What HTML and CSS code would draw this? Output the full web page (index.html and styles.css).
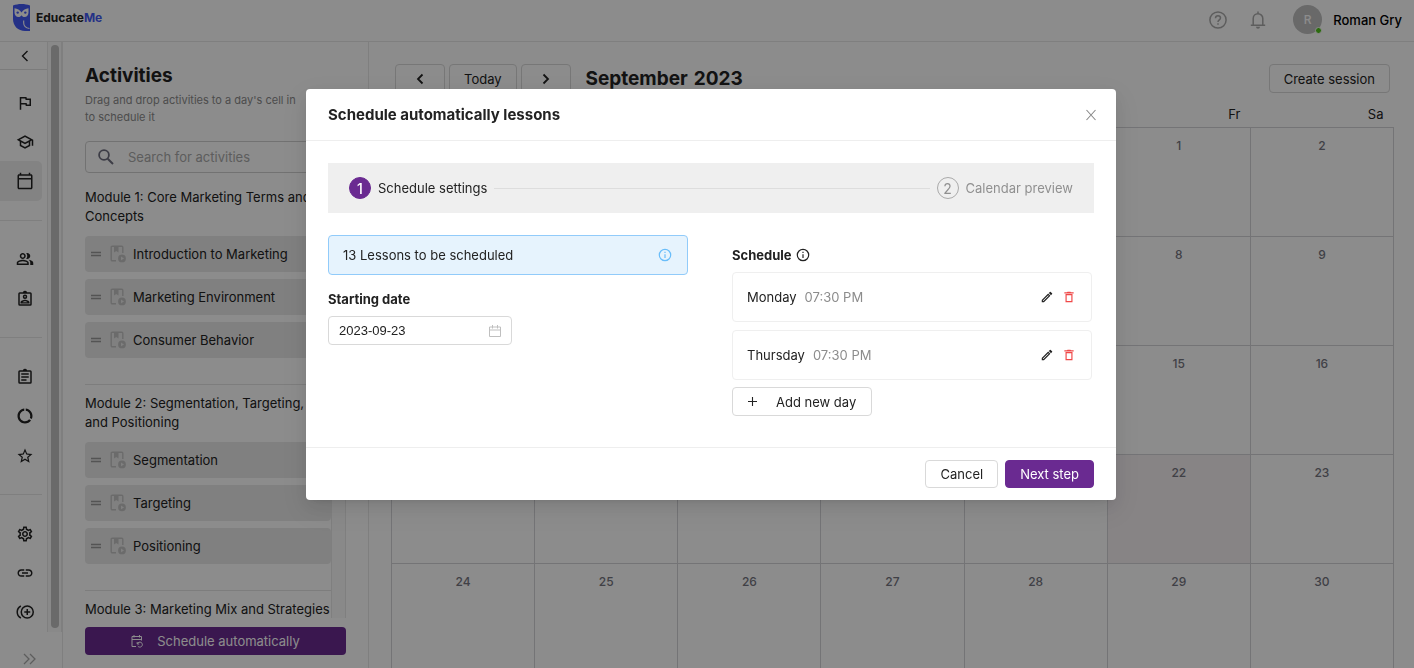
FILE: index.html
```
<!DOCTYPE html>
<html lang="en">
<head>
    <meta charset="UTF-8" />
    <meta name="viewport" content="width=device-width, initial-scale=1.0"/>
    <title>EducateMe - Schedule</title>
    <link rel="stylesheet" href="styles.css">
</head>
<body>
<svg class="sprite" aria-hidden="true">
    <symbol id="i-drag" viewBox="0 0 12 8"><path d="M1 2.500h10M1 5.500h10" stroke="currentColor" stroke-width="1.400"/></symbol>
    <symbol id="i-lesson" viewBox="0 0 16 18">
        <path d="M6 15.800H2.200a1 1 0 0 1-1-1V2.200a1 1 0 0 1 1-1h9.600a1 1 0 0 1 1 1V8" fill="none" stroke="currentColor" stroke-width="1.400"/>
        <path d="M4 1.500h4.500v6L6.250 6 4 7.500z" fill="currentColor"/>
        <path fill-rule="evenodd" d="M12 9.500a3.900 3.900 0 1 0 0 7.800 3.900 3.900 0 0 0 0-7.800zM11 11.500l3 1.900-3 1.900z" fill="currentColor"/>
    </symbol>
    <symbol id="i-edit" viewBox="0 0 24 24"><path fill="currentColor" d="M3 17.250V21h3.750L17.810 9.940l-3.750-3.750L3 17.250zM5.920 19H5v-.92l9.060-9.060.92.92L5.920 19zM20.710 5.630l-2.340-2.340a1 1 0 0 0-1.410 0l-1.830 1.830 3.750 3.750 1.830-1.830a1 1 0 0 0 0-1.410z"/></symbol>
    <symbol id="i-delete" viewBox="0 0 24 24"><path fill="currentColor" d="M6 21h12V7H6v14zM8 9h8v10H8V9zm7.500-5l-1-1h-5l-1 1H4v2h16V4h-4.500z"/></symbol>
    <symbol id="i-info" viewBox="0 0 14 14"><circle cx="7" cy="7" r="5.700" fill="none" stroke="currentColor" stroke-width="1.200"/><path d="M7 6.200V10M7 3.800v1.300" stroke="currentColor" stroke-width="1.200"/></symbol>
</svg>

<header class="topbar">
    <a class="logo" href="#">
        <svg class="logo-mark" viewBox="0 0 17 27">
            <path fill="#4359f5" d="M0 1.500C3 .5 5 0 8.500 0S14 .5 17 1.500V27h-5C5 27 0 22 0 15z"/>
            <path fill="#fff" d="M1.500 4.200c2.800.2 5.300 1.600 7 4.300 1.700-2.700 4.200-4.100 7-4.300v4.300c0 2.700-1.700 4.500-4 4.500-1.400 0-2.300-.6-3-1.800-.7 1.200-1.600 1.800-3 1.800-2.300 0-4-1.800-4-4.500z"/>
            <circle cx="4.700" cy="8.600" r="1.200" fill="#4359f5"/><circle cx="12.300" cy="8.600" r="1.200" fill="#4359f5"/>
            <path d="M10.700 16.500v2.500c0 3 2 5 5.800 5.500" fill="none" stroke="#fff" stroke-width="1.100"/>
        </svg>
        <span>Educate<b>Me</b></span>
    </a>
    <div class="topbar-right">
        <button class="icon-btn" aria-label="Help">
            <svg width="18" height="18" viewBox="0 0 18 18" fill="none" stroke="currentColor" stroke-width="1.500"><circle cx="9" cy="9" r="8.100"/><path d="M6.500 7.200C6.500 5.700 7.600 4.700 9 4.700s2.500 1 2.500 2.300c0 1.800-2.500 2-2.500 4M9 12.200v1.600"/></svg>
        </button>
        <button class="icon-btn" aria-label="Notifications">
            <svg width="16" height="18" viewBox="0 0 16 18"><path d="M3.200 14V7.500a4.800 4.800 0 0 1 9.600 0V14M.8 14.200h14.400M8 .6v2" fill="none" stroke="currentColor" stroke-width="1.500"/><path d="M6 15.800h4a2 2 0 0 1-4 0z" fill="currentColor"/></svg>
        </button>
        <span class="avatar">R<i class="online"></i></span>
        <span class="user-name">Roman Gry</span>
    </div>
</header>

<div class="layout">
    <aside class="sidebar">
        <div class="sidebar-scroll">
            <div class="sidebar-main">
                <button class="collapse" aria-label="Back">
                    <svg width="8" height="12" viewBox="0 0 8 12"><path d="M6.500 1L1.500 6l5 5" fill="none" stroke="currentColor" stroke-width="1.400"/></svg>
                </button>
                <nav class="side-nav">
                    <a href="#" aria-label="Goals"><svg viewBox="0 0 24 24"><path d="M12.360 6l.4 2H18v6h-3.360l-.4-2H7V6h5.360M14 4H5v17h2v-7h5.600l.4 2h7V6h-5.600L14 4z"/></svg></a>
                    <a href="#" aria-label="Courses"><svg viewBox="0 0 24 24"><path d="M12 3L1 9l4 2.180v6L12 21l7-3.820v-6l2-1.090V17h2V9L12 3zm6.820 6L12 12.720 5.180 9 12 5.280 18.820 9zM17 15.990l-5 2.730-5-2.730v-3.720L12 15l5-2.730v3.720z"/></svg></a>
                    <a href="#" class="active" aria-label="Calendar"><svg viewBox="0 0 24 24"><path d="M20 3h-1V1h-2v2H7V1H5v2H4c-1.100 0-2 .9-2 2v16c0 1.100.9 2 2 2h16c1.100 0 2-.9 2-2V5c0-1.100-.9-2-2-2zm0 18H4V10h16v11zm0-13H4V5h16v3z"/></svg></a>
                    <span class="sep"></span>
                    <a href="#" aria-label="People"><svg viewBox="0 0 24 24"><path d="M16.670 13.130C18.040 14.060 19 15.320 19 17v3h4v-3c0-2.180-3.570-3.470-6.330-3.870zM15 12c2.210 0 4-1.790 4-4s-1.790-4-4-4c-.47 0-.91.1-1.330.24C14.500 5.270 15 6.580 15 8s-.5 2.730-1.330 3.760c.42.14.86.24 1.330.24zM9 12c2.210 0 4-1.790 4-4s-1.790-4-4-4-4 1.790-4 4 1.790 4 4 4zm0-6c1.100 0 2 .9 2 2s-.9 2-2 2-2-.9-2-2 .9-2 2-2zM9 13c-2.670 0-8 1.340-8 4v3h16v-3c0-2.660-5.330-4-8-4zm6 5H3v-.99C3.200 16.290 6.300 15 9 15s5.800 1.290 6 2v1z"/></svg></a>
                    <a href="#" aria-label="Profiles"><svg viewBox="0 0 24 24"><path fill-rule="evenodd" d="M5 3h4.200a3 3 0 0 1 5.600 0H19a2 2 0 0 1 2 2v14a2 2 0 0 1-2 2H5a2 2 0 0 1-2-2V5a2 2 0 0 1 2-2zm0 2v14h14V5zM12 6a3 3 0 1 1 0 6 3 3 0 0 1 0-6zm0 2a1 1 0 1 0 0 2 1 1 0 0 0 0-2zM6 18v-1.500C6 14.300 10 13 12 13s6 1.300 6 3.500V18zm2.500-1.600h7c-.7-.7-2.400-1.400-3.500-1.400s-2.800.7-3.500 1.400z"/></svg></a>
                    <span class="sep"></span>
                    <a href="#" aria-label="Assignments"><svg viewBox="0 0 24 24"><path fill-rule="evenodd" d="M5 3h4.200a3 3 0 0 1 5.600 0H19a2 2 0 0 1 2 2v14a2 2 0 0 1-2 2H5a2 2 0 0 1-2-2V5a2 2 0 0 1 2-2zm0 2v14h14V5zM7 7h10v2H7zm0 4h10v2H7zm0 4h7v2H7z"/></svg></a>
                    <a href="#" aria-label="Progress"><svg viewBox="0 0 24 24"><path d="M13 2.050v3.030c3.390.49 6 3.390 6 6.920 0 .9-.18 1.750-.48 2.540l2.600 1.530c.56-1.240.88-2.620.88-4.070 0-5.180-3.950-9.450-9-9.950zM12 19c-3.870 0-7-3.130-7-7 0-3.530 2.610-6.430 6-6.920V2.050c-5.060.5-9 4.760-9 9.950 0 5.520 4.470 10 9.990 10 3.310 0 6.240-1.610 8.060-4.090l-2.600-1.530C16.170 17.980 14.210 19 12 19z"/></svg></a>
                    <a href="#" aria-label="Reviews"><svg viewBox="0 0 24 24"><path d="M22 9.240l-7.190-.62L12 2 9.190 8.630 2 9.240l5.460 4.730L5.820 21 12 17.270 18.180 21l-1.630-7.030L22 9.240zM12 15.400l-3.760 2.270 1-4.280-3.320-2.880 4.380-.38L12 6.100l1.710 4.040 4.380.38-3.320 2.880 1 4.280L12 15.400z"/></svg></a>
                    <span class="sep"></span>
                    <a href="#" aria-label="Settings"><svg viewBox="0 0 24 24"><path d="M19.430 12.980c.04-.32.07-.64.07-.98s-.03-.66-.07-.98l2.110-1.650c.19-.15.24-.42.12-.64l-2-3.460c-.09-.16-.26-.25-.44-.25-.06 0-.12.01-.17.03l-2.490 1c-.52-.4-1.080-.73-1.690-.98l-.38-2.650C14.460 2.180 14.250 2 14 2h-4c-.25 0-.46.18-.49.42l-.38 2.650c-.61.25-1.170.59-1.690.98l-2.490-1c-.06-.02-.12-.03-.18-.03-.17 0-.34.09-.43.25l-2 3.460c-.13.22-.07.49.12.64l2.110 1.650c-.04.32-.07.65-.07.98s.03.66.07.98l-2.110 1.650c-.19.15-.24.42-.12.64l2 3.460c.09.16.26.25.44.25.06 0 .12-.01.17-.03l2.490-1c.52.4 1.080.73 1.690.98l.38 2.650c.03.24.24.42.49.42h4c.25 0 .46-.18.49-.42l.38-2.650c.61-.25 1.170-.59 1.690-.98l2.490 1c.06.02.12.03.18.03.17 0 .34-.09.43-.25l2-3.460c.12-.22.07-.49-.12-.64l-2.110-1.650zm-1.980-1.710c.04.31.05.52.05.73 0 .21-.02.43-.05.73l-.14 1.130.89.7 1.080.84-.7 1.210-1.270-.51-1.040-.42-.9.68c-.43.32-.84.56-1.250.73l-1.060.43-.16 1.130-.2 1.350h-1.400l-.19-1.350-.16-1.130-1.060-.43c-.43-.18-.83-.41-1.230-.71l-.91-.7-1.060.43-1.270.51-.7-1.210 1.080-.84.89-.7-.14-1.130c-.03-.31-.05-.54-.05-.74s.02-.43.05-.73l.14-1.130-.89-.7-1.080-.84.7-1.210 1.270.51 1.040.42.9-.68c.43-.32.84-.56 1.250-.73l1.060-.43.16-1.130.2-1.350h1.390l.19 1.350.16 1.130 1.060.43c.43.18.83.41 1.230.71l.91.7 1.060-.43 1.270-.51.7 1.210-1.070.85-.89.7.14 1.130zM12 8c-2.210 0-4 1.790-4 4s1.790 4 4 4 4-1.790 4-4-1.790-4-4-4zm0 6c-1.100 0-2-.9-2-2s.9-2 2-2 2 .9 2 2-.9 2-2 2z"/></svg></a>
                    <a href="#" aria-label="Integrations"><svg viewBox="0 0 24 24"><path d="M3.900 12c0-1.710 1.390-3.100 3.100-3.100h4V7H7c-2.760 0-5 2.240-5 5s2.240 5 5 5h4v-1.900H7c-1.710 0-3.100-1.390-3.100-3.100zM8 13h8v-2H8v2zm9-6h-4v1.900h4c1.710 0 3.100 1.390 3.100 3.100s-1.390 3.100-3.100 3.100h-4V17h4c2.760 0 5-2.240 5-5s-2.240-5-5-5z"/></svg></a>
                    <a href="#" aria-label="Add"><svg viewBox="0 0 24 24"><path d="M15 4a8 8 0 1 0 0 16 8 8 0 0 0 0-16m0 4v8m-4-4h8M6.500 4a9 9 0 0 0 0 16" fill="none" stroke="#222" stroke-width="2"/></svg></a>
                </nav>
            </div>
            <div class="scrollbar"><span></span></div>
        </div>
        <button class="expand" aria-label="Expand menu">
            <svg width="13" height="12" viewBox="0 0 13 12"><path d="M1 1l5 5-5 5M7 1l5 5-5 5" fill="none" stroke="currentColor" stroke-width="1.300"/></svg>
        </button>
    </aside>

    <section class="activities">
        <h1>Activities</h1>
        <p class="hint">Drag and drop activities to a day's cell in<br>to schedule it</p>
        <label class="search">
            <svg width="16" height="16" viewBox="0 0 16 16"><circle cx="6" cy="6" r="4.900" fill="none" stroke="currentColor" stroke-width="1.800"/><path d="M9.700 9.700l5.300 5.300" stroke="currentColor" stroke-width="2"/></svg>
            <input type="text" placeholder="Search for activities" aria-label="Search for activities">
        </label>
        <div class="list-wrap">
            <div class="module-list">
                <div class="module">
                    <h2>Module 1: Core Marketing Terms and Concepts</h2>
                    <ul>
                        <li><svg class="drag"><use href="#i-drag"/></svg><svg class="lesson"><use href="#i-lesson"/></svg>Introduction to Marketing</li>
                        <li><svg class="drag"><use href="#i-drag"/></svg><svg class="lesson"><use href="#i-lesson"/></svg>Marketing Environment</li>
                        <li><svg class="drag"><use href="#i-drag"/></svg><svg class="lesson"><use href="#i-lesson"/></svg>Consumer Behavior</li>
                    </ul>
                </div>
                <div class="module">
                    <h2>Module 2: Segmentation, Targeting,<br>and Positioning</h2>
                    <ul>
                        <li><svg class="drag"><use href="#i-drag"/></svg><svg class="lesson"><use href="#i-lesson"/></svg>Segmentation</li>
                        <li><svg class="drag"><use href="#i-drag"/></svg><svg class="lesson"><use href="#i-lesson"/></svg>Targeting</li>
                        <li><svg class="drag"><use href="#i-drag"/></svg><svg class="lesson"><use href="#i-lesson"/></svg>Positioning</li>
                    </ul>
                </div>
                <div class="module">
                    <h2>Module 3: Marketing Mix and Strategies</h2>
                </div>
            </div>
            <div class="list-track"></div>
        </div>
        <button class="btn primary auto-btn">
            <svg width="12" height="13" viewBox="0 0 12 13" fill="none" stroke="currentColor"><path d="M5 11.500H1v-10h9.500v4M1 4.500h9.500M3 0v2.500M8.500 0v2.500M6.200 7v2h2M6.500 8.800a2.500 2.500 0 1 1 .3 2.200"/></svg>
            Schedule automatically
        </button>
    </section>

    <main class="calendar">
        <div class="toolbar">
            <button class="btn arrow" aria-label="Previous month"><svg width="8" height="12" viewBox="0 0 8 12"><path d="M6.500 1.500L2 6l4.500 4.500" fill="none" stroke="currentColor" stroke-width="1.800"/></svg></button>
            <button class="btn">Today</button>
            <button class="btn arrow" aria-label="Next month"><svg width="8" height="12" viewBox="0 0 8 12"><path d="M1.500 1.500L6 6l-4.500 4.500" fill="none" stroke="currentColor" stroke-width="1.800"/></svg></button>
            <h2><span>September</span><span>2023</span></h2>
            <button class="btn create">Create session</button>
        </div>
        <table>
            <thead>
                <tr><th></th><th></th><th></th><th></th><th></th><th>Fr</th><th>Sa</th></tr>
            </thead>
            <tbody>
                <tr><td></td><td></td><td></td><td></td><td></td><td>1</td><td>2</td></tr>
                <tr><td></td><td></td><td></td><td></td><td></td><td>8</td><td>9</td></tr>
                <tr><td></td><td></td><td></td><td></td><td></td><td>15</td><td>16</td></tr>
                <tr><td></td><td></td><td></td><td></td><td></td><td class="today">22</td><td>23</td></tr>
                <tr><td>24</td><td>25</td><td>26</td><td>27</td><td>28</td><td>29</td><td>30</td></tr>
            </tbody>
        </table>
    </main>
</div>

<div class="overlay">
    <div class="modal" role="dialog" aria-labelledby="modal-title">
        <div class="modal-header">
            <h2 id="modal-title">Schedule automatically lessons</h2>
            <button class="close" aria-label="Close"><svg width="10" height="12" viewBox="0 0 10 12"><path d="M.5 1l9 10M9.500 1l-9 10" stroke="currentColor" stroke-width="1.100"/></svg></button>
        </div>
        <div class="modal-body">
            <ol class="steps">
                <li class="current"><span class="num">1</span>Schedule settings</li>
                <li class="line" aria-hidden="true"></li>
                <li><span class="num">2</span>Calendar preview</li>
            </ol>
            <div class="columns">
                <div class="column">
                    <div class="notice"><span>13 Lessons to be scheduled</span><svg><use href="#i-info"/></svg></div>
                    <label class="field-label" for="start-date">Starting date</label>
                    <div class="date-field">
                        <input type="text" id="start-date" value="2023-09-23">
                        <svg width="12" height="12" viewBox="0 0 12 12"><path d="M.5 2h11v9.500H.5zM.5 5h11M3.500 0v3.500M8.500 0v3.500" fill="none" stroke="currentColor"/></svg>
                    </div>
                </div>
                <div class="column">
                    <h3>Schedule <svg><use href="#i-info"/></svg></h3>
                    <div class="day">
                        <span>Monday</span><time>07:30 PM</time>
                        <button aria-label="Edit Monday"><svg><use href="#i-edit"/></svg></button>
                        <button class="delete" aria-label="Delete Monday"><svg><use href="#i-delete"/></svg></button>
                    </div>
                    <div class="day">
                        <span>Thursday</span><time>07:30 PM</time>
                        <button aria-label="Edit Thursday"><svg><use href="#i-edit"/></svg></button>
                        <button class="delete" aria-label="Delete Thursday"><svg><use href="#i-delete"/></svg></button>
                    </div>
                    <button class="btn add-day">
                        <svg width="9" height="9" viewBox="0 0 9 9"><path d="M4.500 0v9M0 4.500h9" stroke="currentColor" stroke-width="1.100"/></svg>
                        Add new day
                    </button>
                </div>
            </div>
        </div>
        <div class="modal-footer">
            <button class="btn">Cancel</button>
            <button class="btn primary">Next step</button>
        </div>
    </div>
</div>
</body>
</html>
```
FILE: styles.css
```
* {
    box-sizing: border-box;
}

body {
    margin: 0;
    height: 100vh;
    display: flex;
    flex-direction: column;
    overflow: hidden;
    font-family: Inter, "Open Sans", sans-serif;
    font-size: 13px;
    color: #222;
    background: #fff;
}

h1, h2, h3, p, ul, ol {
    margin: 0;
    padding: 0;
    list-style: none;
}

button, input {
    font: inherit;
    color: inherit;
}

button {
    display: flex;
    align-items: center;
    justify-content: center;
    padding: 0;
    border: none;
    background: none;
    cursor: pointer;
}

.sprite {
    display: none;
}

.btn {
    height: 29px;
    padding: 0 14px;
    border: 1px solid #d9d9d9;
    border-radius: 4px;
    background: #fff;
    white-space: nowrap;
}

.btn.primary {
    background: #6a2a91;
    border-color: #6a2a91;
    color: #fff;
}

/* top bar */
.topbar {
    display: flex;
    justify-content: space-between;
    align-items: center;
    height: 42px;
    padding: 0 12px 2px 13px;
    border-bottom: 1px solid #e8e8e8;
}

.logo {
    display: flex;
    align-items: center;
    gap: 6px;
    font-size: 12px;
    font-weight: 700;
    color: #222;
    text-decoration: none;
}

.logo-mark {
    width: 17px;
    height: 27px;
    margin-bottom: 4px;
}

.logo span {
    margin-bottom: 4px;
}

.logo b {
    font-weight: 700;
    color: #4359f5;
}

.topbar-right {
    display: flex;
    align-items: center;
}

.icon-btn {
    margin-right: 23px;
    color: #aaa;
}

.icon-btn + .avatar {
    margin-left: 4px;
}

.avatar {
    position: relative;
    display: flex;
    align-items: center;
    justify-content: center;
    width: 29px;
    height: 29px;
    margin-right: 11px;
    border-radius: 50%;
    background: #bfbfbf;
    color: #fff;
    font-size: 12px;
    font-weight: 500;
}

.online {
    position: absolute;
    right: 0;
    bottom: 0;
    width: 7px;
    height: 7px;
    border-radius: 50%;
    border: 1px solid #fff;
    background: #4fc31a;
}

.user-name {
    font-weight: 500;
    color: #000;
}

.layout {
    flex: 1;
    display: flex;
    min-height: 0;
}

/* left menu */
.sidebar {
    display: flex;
    flex-direction: column;
    width: 63px;
    border-right: 1px solid #e8e8e8;
}

.sidebar-scroll {
    flex: 1;
    display: flex;
    min-height: 0;
}

.sidebar-main {
    display: flex;
    flex-direction: column;
    width: 47px;
}

.collapse {
    height: 28px;
    padding-left: 2px;
    border-bottom: 1px solid #e0e0e0;
}

.side-nav {
    flex: 1;
    display: flex;
    flex-direction: column;
    padding: 13px 5px 0 0;
}

.side-nav a, .side-nav .sep {
    flex: 1;
    display: flex;
    align-items: center;
    justify-content: center;
    padding-left: 8px;
}

.side-nav svg {
    width: 18px;
    height: 18px;
    fill: #222;
}

.side-nav .active {
    border-radius: 0 5px 5px 0;
    background: #efefef;
}

.side-nav .sep {
    padding: 0;
}

.side-nav .sep::before {
    content: "";
    flex: 1;
    height: 1px;
    background: #e8e8e8;
}

.scrollbar {
    width: 15px;
    padding: 3px 2px 4px 3px;
    border: solid #e8e8e8;
    border-width: 0 1px;
    background: #fafafa;
}

.scrollbar span {
    display: block;
    height: 100%;
    border-radius: 4px;
    background: #c1c1c1;
}

.expand {
    height: 36px;
    padding: 18px 4px 0 0;
    color: #aaa;
}

/* activities */
.activities {
    display: flex;
    flex-direction: column;
    width: 306px;
    padding: 20px 22px 13px;
    border-right: 1px solid #e8e8e8;
}

.activities h1 {
    font-size: 19px;
    line-height: 28px;
    font-weight: 700;
}

.hint {
    margin: 2px 0 15px;
    font-size: 11px;
    line-height: 17px;
    color: #8c8c8c;
}

.search {
    display: flex;
    align-items: center;
    gap: 14px;
    height: 32px;
    flex-shrink: 0;
    padding: 0 12px;
    border: 1px solid #d0d0d0;
    border-radius: 4px;
    color: #6f6f80;
}

.search input {
    flex: 1;
    min-width: 0;
    padding: 0;
    border: none;
    outline: none;
    background: none;
}

.search input::placeholder {
    color: #aaa;
}

.list-wrap {
    flex: 1;
    display: flex;
    min-height: 0;
    margin: 15px 0 9px;
}

.module-list {
    flex: 1;
    overflow: hidden;
}

.list-track {
    width: 15px;
    border: solid #e8e8e8;
    border-width: 0 1px;
    background: #fafafa;
}

.module + .module {
    margin-top: 26px;
    padding-top: 9px;
    border-top: 1px solid #e4e4e4;
}

.module h2 {
    margin-bottom: 10px;
    font-size: 13px;
    line-height: 19px;
    font-weight: 400;
}

.module ul {
    display: flex;
    flex-direction: column;
    gap: 7px;
}

.module li {
    display: flex;
    align-items: center;
    height: 36px;
    padding-left: 5px;
    border-radius: 4px;
    background: #e9e9e9;
}

.drag {
    width: 12px;
    height: 8px;
    margin-right: 8px;
    color: #999;
}

.lesson {
    width: 16px;
    height: 18px;
    margin-right: 7px;
    color: #c4c4c4;
}

.auto-btn {
    height: 28px;
    flex-shrink: 0;
    gap: 14px;
    border: none;
}

/* calendar */
.calendar {
    flex: 1;
    min-width: 0;
    padding: 22px 20px 0 22px;
    overflow: hidden;
}

.toolbar {
    display: flex;
    align-items: center;
    gap: 4px;
    padding: 0 4px;
}

.btn.arrow {
    width: 50px;
}

.toolbar h2 {
    display: flex;
    gap: 6px;
    margin: 0 auto 0 11px;
    font-size: 19px;
    line-height: 24px;
    font-weight: 700;
}

table {
    width: 100%;
    margin-top: 8px;
    border-collapse: collapse;
    table-layout: fixed;
}

th {
    height: 26px;
    padding: 0 10px 0 0;
    text-align: right;
    font-weight: 400;
}

td {
    height: 109px;
    padding: 9px 0;
    border: 1px solid #d4d4d8;
    vertical-align: top;
    text-align: center;
    font-size: 12px;
    line-height: 18px;
    font-weight: 500;
    color: #757580;
}

.today {
    background: #f6f0f3;
}

/* dialog */
.overlay {
    position: fixed;
    inset: 0;
    display: flex;
    justify-content: center;
    align-items: flex-start;
    padding: 89px 0 0 8px;
    background: rgba(0, 0, 0, 0.45);
}

.modal {
    width: 810px;
    max-width: 100%;
    border-radius: 4px;
    background: #fff;
    box-shadow: 0 3px 6px -4px rgba(0, 0, 0, 0.12), 0 6px 16px rgba(0, 0, 0, 0.08), 0 9px 28px 8px rgba(0, 0, 0, 0.05);
}

.modal-header {
    display: flex;
    justify-content: space-between;
    align-items: center;
    height: 52px;
    padding: 0 20px 0 22px;
    border-bottom: 1px solid #eee;
}

.modal-header h2 {
    font-size: 15px;
    font-weight: 700;
}

.close {
    color: #888;
}

.modal-body {
    padding: 22px 22px 31px;
}

.steps {
    display: flex;
    align-items: center;
    height: 50px;
    padding: 0 21px;
    background: #efefef;
    color: #909090;
}

.steps li {
    display: flex;
    align-items: center;
    gap: 7px;
}

.steps .current {
    color: #222;
}

.steps .line {
    flex: 1;
    height: 1px;
    margin: 0 7px;
    background: #ddd;
}

.num {
    display: flex;
    align-items: center;
    justify-content: center;
    width: 22px;
    height: 22px;
    border: 1px solid #aaa;
    border-radius: 50%;
    font-size: 14px;
}

.current .num {
    border-color: #6a2a91;
    background: #6a2a91;
    color: #fff;
    font-weight: 500;
}

.columns {
    display: flex;
    gap: 44px;
    padding: 22px 2px 0 0;
}

.column {
    flex: 1;
}

.notice {
    display: flex;
    justify-content: space-between;
    align-items: center;
    height: 40px;
    padding: 0 15px 0 14px;
    border: 1px solid #91cbfa;
    border-radius: 4px;
    background: #e6f3fd;
}

.notice svg, .column h3 svg {
    width: 14px;
    height: 14px;
}

.notice svg {
    color: #69bdfa;
}

.field-label {
    display: block;
    margin: 14px 0 7px;
    line-height: 20px;
    font-weight: 700;
}

.date-field {
    display: flex;
    align-items: center;
    width: 184px;
    height: 29px;
    padding: 0 10px;
    border: 1px solid #d9d9d9;
    border-radius: 4px;
    color: #bfbfbf;
}

.date-field input {
    flex: 1;
    min-width: 0;
    padding: 0;
    border: none;
    outline: none;
    font-family: "Liberation Sans", Arial, sans-serif;
    color: #222;
}

.column h3 {
    display: flex;
    align-items: center;
    gap: 4px;
    margin: 10px 0 7px;
    font-size: 13px;
    line-height: 20px;
    font-weight: 700;
}

.day {
    display: flex;
    align-items: center;
    height: 50px;
    margin-bottom: 8px;
    padding: 0 15px 0 14px;
    border: 1px solid #efefef;
    border-radius: 4px;
}

.day time {
    margin: 0 auto 0 8px;
    color: #8c8c8c;
}

.day button {
    margin-left: 8px;
}

.day svg {
    width: 14px;
    height: 14px;
}

.day .delete {
    color: #f04848;
}

.day + .btn {
    margin-top: -1px;
}

.add-day {
    gap: 19px;
    padding: 0 15px;
}

.modal-footer {
    display: flex;
    justify-content: flex-end;
    gap: 7px;
    padding: 12px 22px;
    border-top: 1px solid #eee;
}

.modal-footer .btn {
    height: 28px;
}
```
